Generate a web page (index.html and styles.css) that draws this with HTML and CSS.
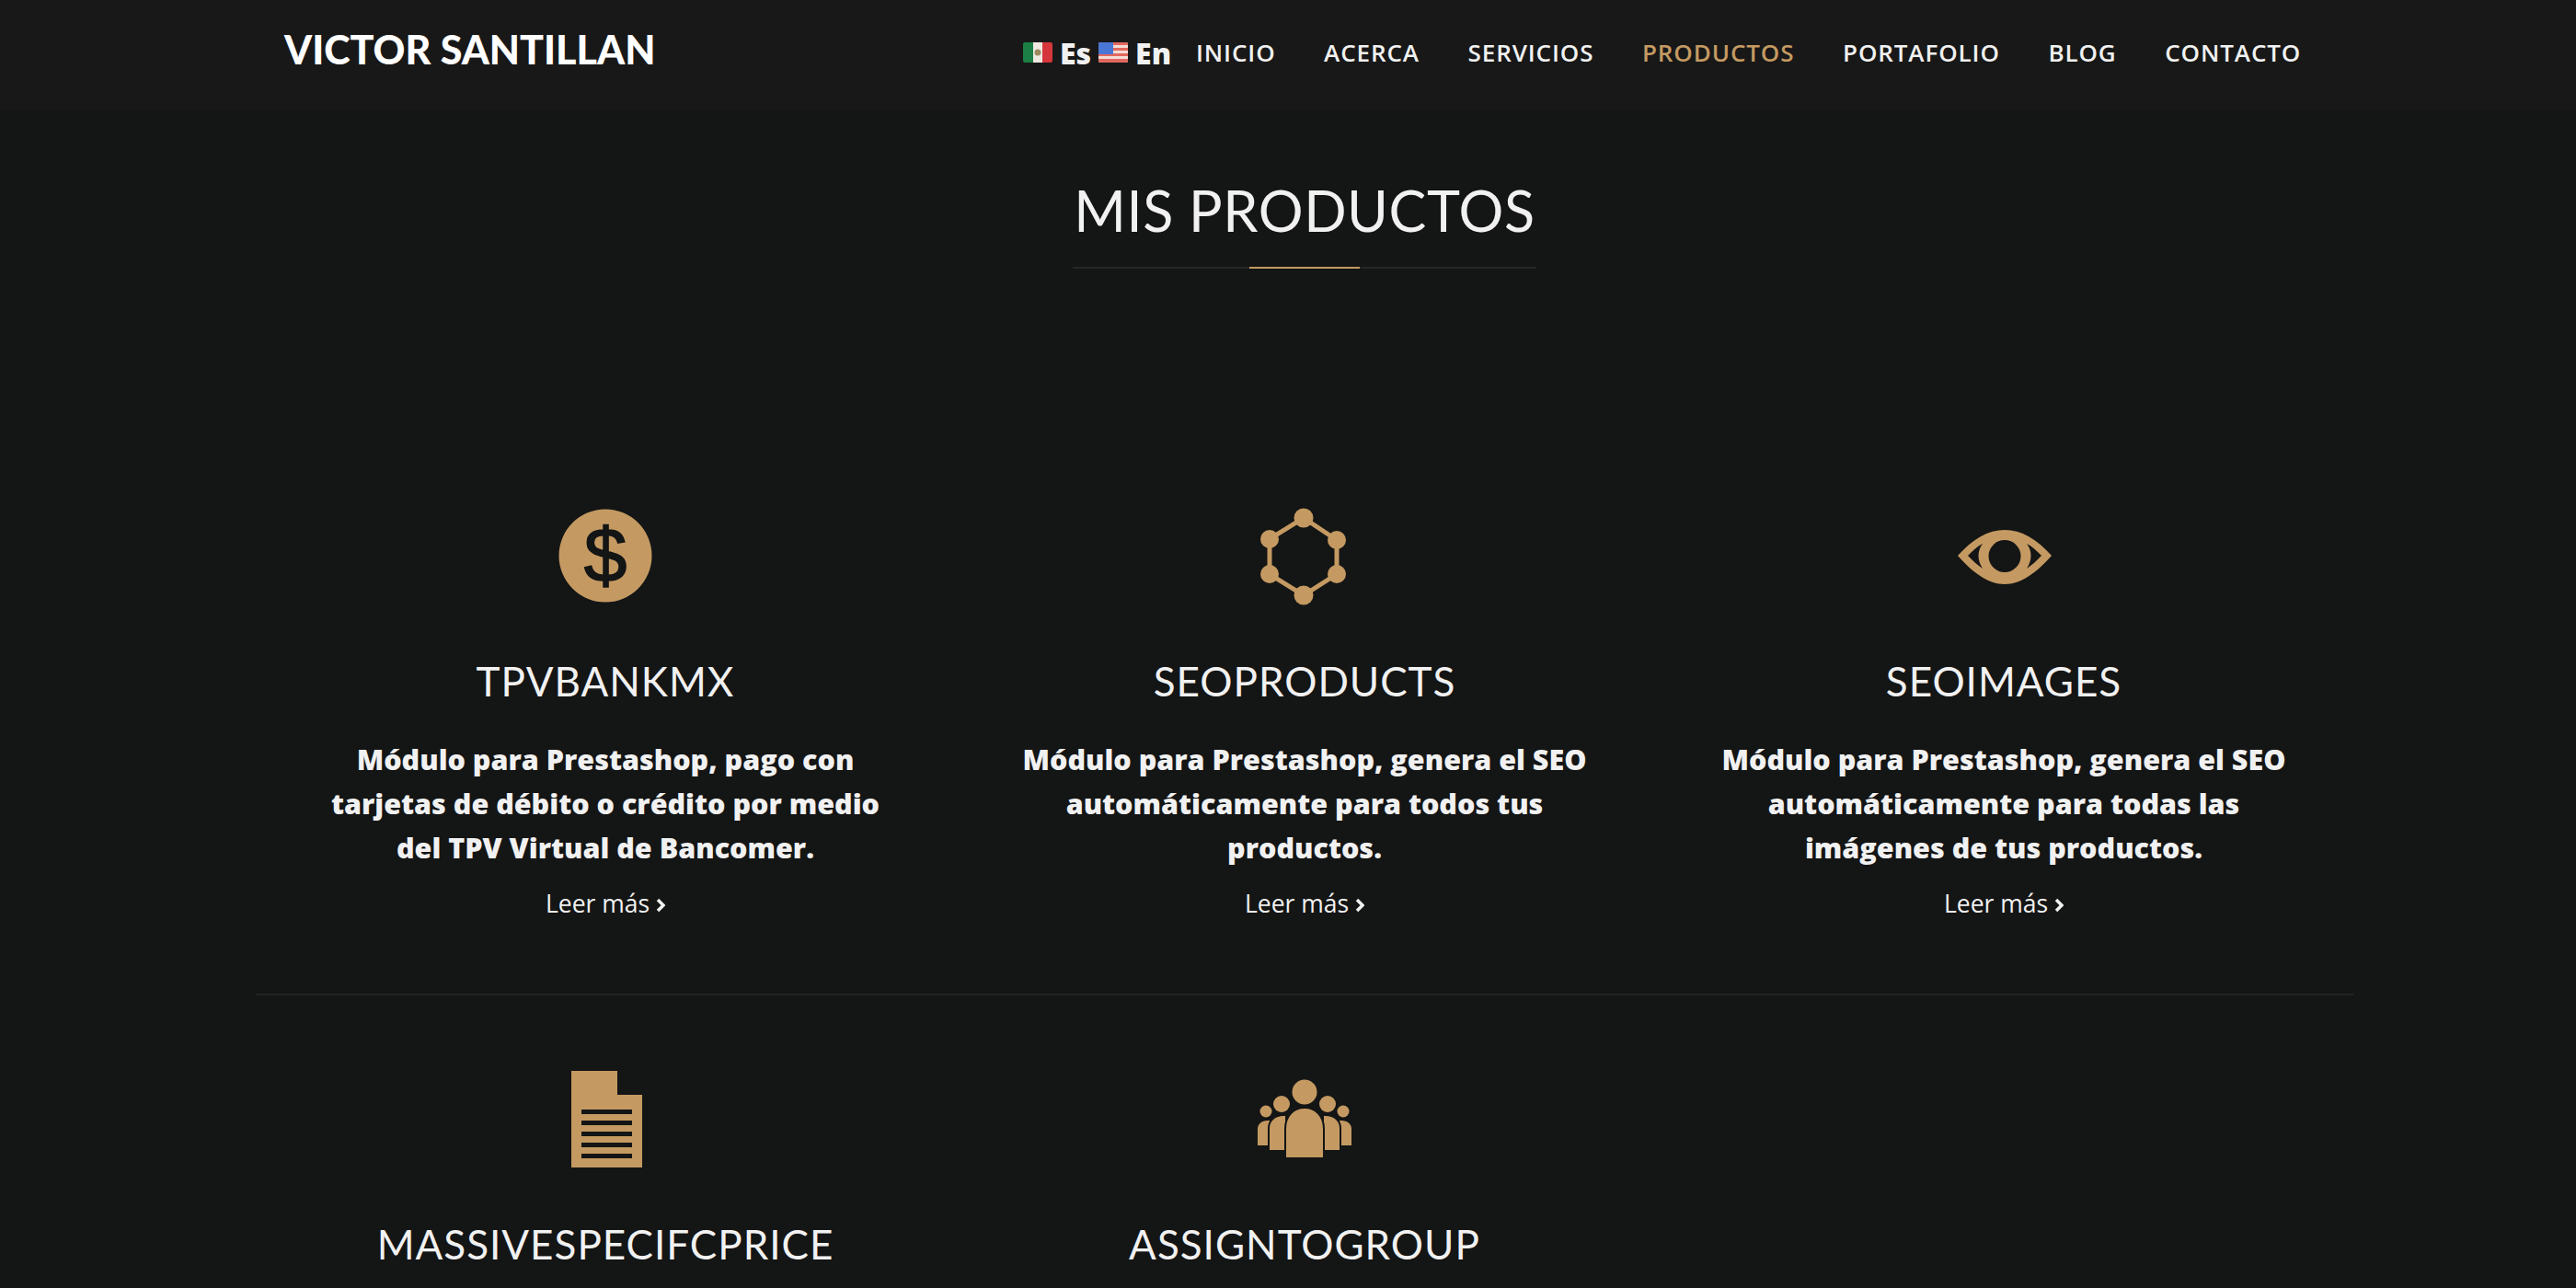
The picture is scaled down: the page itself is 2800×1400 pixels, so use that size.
FILE: index.html
```html
<!DOCTYPE html>
<html lang="es">
<head>
    <meta charset="UTF-8">
    <title>Victor Santillan - Productos</title>
    <link rel="stylesheet" href="styles.css">
</head>
<body>

<header class="topbar">
    <a class="logo" href="#">VICTOR SANTILLAN</a>
    <div class="langs">
        <svg class="flag" viewBox="0 0 32 22">
            <rect width="11" height="22" fill="#1c7f45"/>
            <rect x="11" width="10" height="22" fill="#efe9e2"/>
            <rect x="21" width="11" height="22" fill="#d5363b"/>
            <circle cx="16" cy="11" r="3.5" fill="#9c8a5f"/>
        </svg>
        <a href="#">Es</a>
        <svg class="flag" viewBox="0 0 32 22">
            <rect width="32" height="22" fill="#f4dcd4"/>
            <rect y="0" width="32" height="3" fill="#e2685f"/>
            <rect y="6" width="32" height="3" fill="#e2685f"/>
            <rect y="12" width="32" height="3" fill="#e2685f"/>
            <rect y="18" width="32" height="4" fill="#e2685f"/>
            <rect width="16" height="13" fill="#4a76d6"/>
        </svg>
        <a href="#">En</a>
    </div>
    <nav class="menu">
        <a href="#">INICIO</a>
        <a href="#">ACERCA</a>
        <a href="#">SERVICIOS</a>
        <a href="#" class="active">PRODUCTOS</a>
        <a href="#">PORTAFOLIO</a>
        <a href="#">BLOG</a>
        <a href="#">CONTACTO</a>
    </nav>
</header>

<section class="products">
    <div class="section-title">
        <h2>MIS PRODUCTOS</h2>
        <div class="title-line"><span></span></div>
    </div>

    <div class="row first">
        <article class="product">
            <svg class="icon" viewBox="0 0 120 120">
                <circle cx="60" cy="60" r="50.5" fill="#c49a62"/>
                <text class="dollar" x="60" y="88" text-anchor="middle">$</text>
            </svg>
            <h3>TPVBANKMX</h3>
            <p>Módulo para Prestashop, pago con tarjetas de débito o crédito por medio del TPV Virtual de Bancomer.</p>
            <a class="more" href="#">Leer más <svg class="chevron" viewBox="0 0 10 16"><path d="M2 2l6 6-6 6"/></svg></a>
        </article>
        <article class="product">
            <svg class="icon" viewBox="0 0 120 120">
                <path d="M59 19L95 43V80L59 103L22 80V42Z" fill="none" stroke="#c49a62" stroke-width="5"/>
                <g fill="#c49a62">
                    <circle cx="59" cy="19" r="10.5"/>
                    <circle cx="95" cy="43" r="10"/>
                    <circle cx="95" cy="80" r="10"/>
                    <circle cx="59" cy="103" r="10.5"/>
                    <circle cx="22" cy="80" r="10"/>
                    <circle cx="22" cy="42" r="10"/>
                </g>
            </svg>
            <h3>SEOPRODUCTS</h3>
            <p>Módulo para Prestashop, genera el SEO automáticamente para todos tus productos.</p>
            <a class="more" href="#">Leer más <svg class="chevron" viewBox="0 0 10 16"><path d="M2 2l6 6-6 6"/></svg></a>
        </article>
        <article class="product">
            <svg class="icon" viewBox="0 0 120 120">
                <path fill-rule="evenodd" fill="#c49a62" d="M10 60C26 42 43 32 61 32S96 42 112 60C96 78 79 91 61 91S26 78 10 60ZM21 60C26 65 31 70 37 74C31 65 31 55 37 47C31 50 26 55 21 60ZM85 47C91 55 91 65 85 74C91 70 96 65 101 60C96 55 91 50 85 47ZM61 43A17.5 17.5 0 1 0 61 78A17.5 17.5 0 1 0 61 43Z"/>
            </svg>
            <h3>SEOIMAGES</h3>
            <p>Módulo para Prestashop, genera el SEO automáticamente para todas las imágenes de tus productos.</p>
            <a class="more" href="#">Leer más <svg class="chevron" viewBox="0 0 10 16"><path d="M2 2l6 6-6 6"/></svg></a>
        </article>
    </div>

    <div class="row">
        <article class="product">
            <svg class="icon" viewBox="0 0 120 120">
                <path fill="#c49a62" d="M23 8H73V34H100V113H23Z"/>
                <g fill="#141515">
                    <rect x="34" y="50" width="55" height="5"/>
                    <rect x="34" y="62" width="55" height="5"/>
                    <rect x="34" y="74" width="55" height="5"/>
                    <rect x="34" y="86" width="55" height="5"/>
                    <rect x="34" y="98" width="55" height="5"/>
                </g>
            </svg>
            <h3>MASSIVESPECIFCPRICE</h3>
        </article>
        <article class="product">
            <svg class="icon" viewBox="0 0 120 120">
                <g fill="#c49a62">
                    <path d="M9 89V71C9 66 13 62 20 62H22V89Z"/>
                    <path d="M111 89V71C111 66 107 62 100 62H98V89Z"/>
                    <circle cx="18" cy="52" r="6.5"/>
                    <circle cx="102" cy="52" r="6.5"/>
                    <path d="M21 95V70C21 62 28 56 37 56H40V95Z" stroke="#141515" stroke-width="2"/>
                    <path d="M99 95V70C99 62 92 56 83 56H80V95Z" stroke="#141515" stroke-width="2"/>
                    <circle cx="35" cy="44" r="9"/>
                    <circle cx="85" cy="44" r="9"/>
                    <path d="M39 103V71C39 57 48 48 60 48S81 57 81 71V103Z" stroke="#141515" stroke-width="2"/>
                    <circle cx="60" cy="31" r="13.5"/>
                </g>
            </svg>
            <h3>ASSIGNTOGROUP</h3>
        </article>
        <article class="product"></article>
    </div>
</section>

</body>
</html>
```

FILE: styles.css
```css
* { box-sizing: border-box; }
html, body { height: 1400px; overflow: hidden; }
body {
    margin: 0;
    background: #141515;
    color: #f1f1f1;
    font-family: "Open Sans", sans-serif;
}
a { color: inherit; text-decoration: none; }

.topbar {
    height: 120px;
    background: #181818;
    display: flex;
    align-items: flex-start;
    padding-left: 309px;
}
.logo {
    font-family: Lato, sans-serif;
    font-weight: 900;
    font-size: 43px;
    line-height: 52px;
    margin-top: 28px;
    color: #fff;
    width: 803px;
}
.langs {
    display: flex;
    align-items: center;
    gap: 8px;
    height: 40px;
    margin-top: 37px;
    font-size: 32px;
    font-weight: 800;
    width: 188px;
}
.flag { width: 32px; height: 22px; border-radius: 2px; }
.menu {
    display: flex;
    gap: 52.6px;
    margin-top: 39px;
    font-size: 26px;
    font-weight: 600;
    line-height: 36px;
    letter-spacing: 0.9px;
}
.menu .active { color: #c49a62; }

.products { width: 2280px; margin-left: 278px; }
.section-title {
    width: 504px;
    margin: 0 auto;
    padding-top: 71px;
    text-align: center;
}
.section-title h2 {
    margin: 0;
    font-family: Lato, sans-serif;
    font-weight: 400;
    font-size: 61px;
    line-height: 76px;
    letter-spacing: 0.6px;
    white-space: nowrap;
}
.title-line {
    height: 2px;
    margin-top: 23px;
    background: #262626;
    display: flex;
    justify-content: center;
}
.title-line span { width: 120px; height: 2px; background: #c49a62; }

.row { display: flex; }
.row.first {
    margin-top: 252px;
    padding-bottom: 80px;
    border-bottom: 2px solid #222323;
}
.product {
    width: 760px;
    padding: 0 60px;
    text-align: center;
}
.row:not(.first) .product { padding-top: 74px; }
.icon { display: block; width: 120px; height: 120px; margin: 0 auto; }
.dollar {
    font-family: "Liberation Sans", sans-serif;
    font-size: 84px;
    fill: #141515;
    stroke: #141515;
    stroke-width: 1.5;
}
.product h3 {
    margin: 46px 0 0;
    font-family: Lato, sans-serif;
    font-weight: 400;
    font-size: 44px;
    line-height: 60px;
    letter-spacing: 1px;
}
.product p {
    margin: 31px 0 0;
    font-size: 30.5px;
    font-weight: 800;
    line-height: 48px;
}
.more {
    display: block;
    margin-top: 19px;
    font-size: 26.5px;
    line-height: 36px;
}
.chevron {
    display: inline-block;
    width: 10px;
    height: 16px;
    fill: none;
    stroke: #f1f1f1;
    stroke-width: 3.5;
}
```
